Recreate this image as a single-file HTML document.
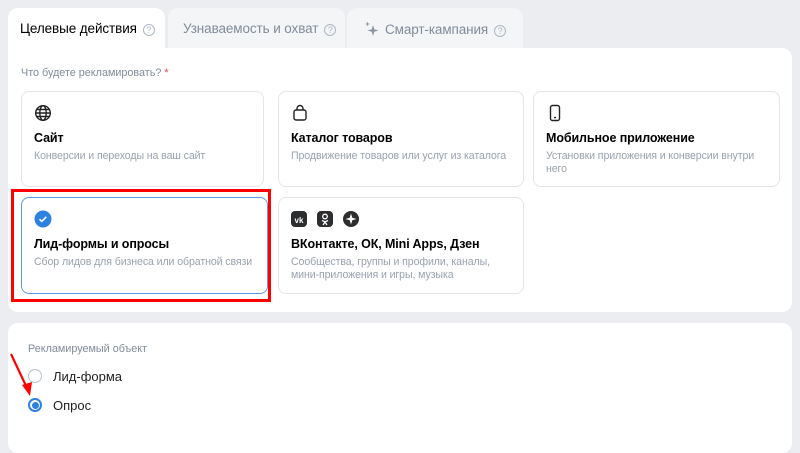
<!DOCTYPE html>
<html><head><meta charset="utf-8"><style>
*{box-sizing:border-box;margin:0;padding:0}
body{width:800px;height:439px;overflow:hidden;background:#ebedf0;font-family:"Liberation Sans","Noto Sans CJK SC",sans-serif;position:relative;color:#000}
.abs{position:absolute}
.tab{position:absolute;top:8px;height:42px;border-radius:10px 10px 0 0;font-size:13.5px;padding-top:13px;background:#f4f5f7;color:#818c99;white-space:nowrap;letter-spacing:-0.1px}
.tab.act{background:#fff;color:#000}
.q{display:inline-block;width:12px;height:12px;border:1px solid #aeb7c2;border-radius:50%;font-size:9px;line-height:10px;text-align:center;color:#aeb7c2;vertical-align:0px;margin-left:6px;letter-spacing:0}
.panel{position:absolute;background:#fff;border-radius:10px}
.card{position:absolute;border:1px solid #e3e5e8;border-radius:8px;background:#fff}
.card .t{position:absolute;left:12px;top:39px;font-size:12.5px;font-weight:bold;white-space:nowrap;letter-spacing:-0.1px}
.card .d{position:absolute;left:12px;top:58px;font-size:10.6px;color:#99a2ad;line-height:13px;right:6px;letter-spacing:-0.1px}
.card svg.i{position:absolute;left:12px;top:12px}
</style></head><body>
<div class="tab act" style="left:8px;width:157px;padding-left:12px">Целевые действия<span class="q">?</span></div>
<div class="tab" style="left:168px;width:177px;padding-left:15px">Узнаваемость и охват<span class="q">?</span></div>
<div class="tab" style="left:347px;width:176px;padding-left:17px"><svg width="16" height="16" viewBox="0 0 16 16" style="vertical-align:-3px;margin-right:5px"><path d="M9 4 L10.3 8.2 L14.5 9.5 L10.3 10.8 L9 15 L7.7 10.8 L3.5 9.5 L7.7 8.2Z" fill="#8b96a3"/><path d="M3.5 0.5 L4.1 2.4 L6 3 L4.1 3.6 L3.5 5.5 L2.9 3.6 L1 3 L2.9 2.4Z" fill="#8b96a3"/></svg>Смарт-кампания<span class="q">?</span></div>

<div class="panel" style="left:8px;top:48px;width:784px;height:264px;border-radius:0 10px 10px 10px"></div>
<div class="abs" style="left:21px;top:67px;font-size:10.8px;color:#818c99">Что будете рекламировать? <span style="color:#e64646">*</span></div>

<div class="card" style="left:21px;top:91px;width:243px;height:96px">
<svg class="i" width="18" height="18" viewBox="0 0 18 18" fill="none" stroke="#222" stroke-width="1.4"><circle cx="9" cy="9" r="7.3"/><ellipse cx="9" cy="9" rx="3.2" ry="7.3"/><path d="M1.7 9h14.6M2.8 5.5h12.4M2.8 12.5h12.4"/></svg>
<div class="t">Сайт</div><div class="d">Конверсии и переходы на ваш сайт</div></div>
<div class="card" style="left:278px;top:91px;width:246px;height:96px">
<svg class="i" width="18" height="18" viewBox="0 0 18 18" fill="none" stroke="#222" stroke-width="1.4"><rect x="3" y="6" width="12" height="10" rx="2"/><path d="M6 6V4.5a3 3 0 0 1 6 0V6"/></svg>
<div class="t">Каталог товаров</div><div class="d">Продвижение товаров или услуг из каталога</div></div>
<div class="card" style="left:533px;top:91px;width:247px;height:96px">
<svg class="i" width="18" height="18" viewBox="0 0 18 18" fill="none" stroke="#222" stroke-width="1.4"><rect x="4.5" y="1.5" width="9" height="15" rx="2"/><path d="M8 13.5h2"/></svg>
<div class="t">Мобильное приложение</div><div class="d" style="right:4px">Установки приложения и конверсии внутри него</div></div>

<div class="card" style="left:21px;top:197px;width:247px;height:97px;border:1.5px solid #5a9be6">
<svg class="i" width="18" height="18" viewBox="0 0 18 18"><circle cx="9" cy="9" r="8.5" fill="#2d81e0"/><path d="M5.5 9.2l2.3 2.2 4.5-4.6" stroke="#fff" stroke-width="1.6" fill="none"/></svg>
<div class="t">Лид-формы и опросы</div><div class="d">Сбор лидов для бизнеса или обратной связи</div></div>
<div class="abs" style="left:11px;top:189px;width:260px;height:113px;border:3px solid #f00"></div>

<div class="card" style="left:278px;top:197px;width:246px;height:97px">
<svg class="i" width="70" height="18" viewBox="0 0 70 18"><rect x="0" y="1" width="16" height="16" rx="4" fill="#2c2d2e"/><text x="8" y="13" font-size="8" font-weight="bold" fill="#fff" text-anchor="middle" font-family="Liberation Sans">vk</text><rect x="26" y="1" width="16" height="16" rx="4" fill="#2c2d2e"/><circle cx="34" cy="6.5" r="2.3" stroke="#fff" stroke-width="1.3" fill="none"/><path d="M31 10.5l3 1.3 3-1.3M32 15l2-3 2 3" stroke="#fff" stroke-width="1.3" fill="none"/><circle cx="60" cy="9" r="8" fill="#2c2d2e"/><path d="M60 3.5 L61.3 7.7 L65.5 9 L61.3 10.3 L60 14.5 L58.7 10.3 L54.5 9 L58.7 7.7Z" fill="#fff"/></svg>
<div class="t">ВКонтакте, ОК, Mini Apps, Дзен</div><div class="d" style="right:20px">Сообщества, группы и профили, каналы, мини-приложения и игры, музыка</div></div>

<div class="panel" style="left:8px;top:323px;width:784px;height:130px"></div>
<div class="abs" style="left:28px;top:343px;font-size:10.8px;color:#818c99">Рекламируемый объект</div>
<div class="abs" style="left:28px;top:369px;width:14px;height:14px;border:1.3px solid #b8c1cc;border-radius:50%"></div>
<div class="abs" style="left:53px;top:369px;font-size:13px;color:#222">Лид-форма</div>
<div class="abs" style="left:28px;top:398px;width:14px;height:14px;border:2px solid #2d81e0;border-radius:50%;background:#fff"><div style="margin:1.5px;width:7px;height:7px;border-radius:50%;background:#2d81e0"></div></div>
<div class="abs" style="left:53px;top:398px;font-size:13px;color:#222">Опрос</div>
<svg class="abs" style="left:8px;top:352px" width="30" height="46" viewBox="0 0 30 46"><path d="M3 2 L19 36" stroke="#f00" stroke-width="2.2"/><path d="M14 33 L22 44 L24 30Z" fill="#f00"/></svg>
</body></html>
